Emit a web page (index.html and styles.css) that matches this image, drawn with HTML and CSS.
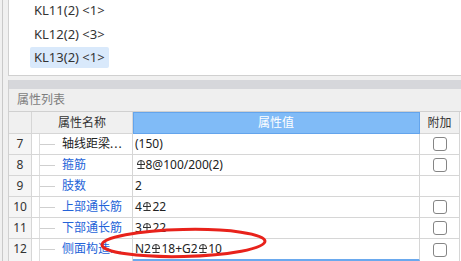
FILE: index.html
```html
<!DOCTYPE html>
<html lang="zh-CN">
<head>
<meta charset="utf-8">
<title>属性列表</title>
<link rel="stylesheet" href="styles.css">
</head>
<body>
<div class="frame">
  <div class="list-panel">
    <div class="item">KL11(2) &lt;1&gt;</div>
    <div class="item">KL12(2) &lt;3&gt;</div>
    <div class="item sel">KL13(2) &lt;1&gt;</div>
  </div>
  <div class="splitter"></div>
  <div class="props">
    <div class="band"></div>
    <div class="title">属性列表</div>
    <div class="grid">
      <div class="cell head"></div>
      <div class="cell head">属性名称</div>
      <div class="cell head value-head">属性值</div>
      <div class="cell head">附加</div>

      <div class="cell num">7</div>
      <div class="cell name"><span class="tree"></span><span class="label">轴线距梁<span class="dots">...</span></span></div>
      <div class="cell val">(150)</div>
      <div class="cell add"><span class="check"></span></div>

      <div class="cell num">8</div>
      <div class="cell name"><span class="tree"></span><span class="label blue">箍筋</span></div>
      <div class="cell val"><svg class="hrb" viewBox="0 0 8 9"><path d="M0.5 4.5V4A3.5 3.5 0 0 1 7.5 4V4.5M0 4.5H8M4 0.5V8.5M0.5 8.5H7.5"/></svg>8@100/200(2)</div>
      <div class="cell add"><span class="check"></span></div>

      <div class="cell num">9</div>
      <div class="cell name"><span class="tree"></span><span class="label blue">肢数</span></div>
      <div class="cell val">2</div>
      <div class="cell add"></div>

      <div class="cell num">10</div>
      <div class="cell name"><span class="tree"></span><span class="label blue">上部通长筋</span></div>
      <div class="cell val">4<svg class="hrb" viewBox="0 0 8 9"><path d="M0.5 4.5V4A3.5 3.5 0 0 1 7.5 4V4.5M0 4.5H8M4 0.5V8.5M0.5 8.5H7.5"/></svg>22</div>
      <div class="cell add"><span class="check"></span></div>

      <div class="cell num">11</div>
      <div class="cell name"><span class="tree"></span><span class="label blue">下部通长筋</span></div>
      <div class="cell val">3<svg class="hrb" viewBox="0 0 8 9"><path d="M0.5 4.5V4A3.5 3.5 0 0 1 7.5 4V4.5M0 4.5H8M4 0.5V8.5M0.5 8.5H7.5"/></svg>22</div>
      <div class="cell add"><span class="check"></span></div>

      <div class="cell num last">12</div>
      <div class="cell name last"><span class="tree"></span><span class="label blue">侧面构造<span class="dots">...</span></span></div>
      <div class="cell val last cur">N2<svg class="hrb" viewBox="0 0 8 9"><path d="M0.5 4.5V4A3.5 3.5 0 0 1 7.5 4V4.5M0 4.5H8M4 0.5V8.5M0.5 8.5H7.5"/></svg>18+G2<svg class="hrb" viewBox="0 0 8 9"><path d="M0.5 4.5V4A3.5 3.5 0 0 1 7.5 4V4.5M0 4.5H8M4 0.5V8.5M0.5 8.5H7.5"/></svg>10</div>
      <div class="cell add last"><span class="check"></span></div>
    </div>
  </div>
</div>
<svg class="mark" viewBox="0 0 461 261" width="461" height="261">
  <ellipse cx="183.5" cy="243" rx="81.5" ry="13.5" transform="rotate(-1.3 183.5 243)"/>
</svg>
</body>
</html>
```
FILE: styles.css
```css
html, body {
  margin: 0;
  padding: 0;
  width: 461px;
  height: 261px;
  overflow: hidden;
  background: #f0f0f0;
  font-family: "Noto Sans", "Noto Sans CJK SC", sans-serif;
  color: #333;
}

.frame {
  margin-left: 2px;
  border-left: 1px solid #c9c9c9;
  padding-left: 5px;
  height: 261px;
  box-sizing: border-box;
}

.list-panel {
  height: 75px;
  background: #fff;
  border-left: 1px solid #d0d0d0;
  border-bottom: 1px solid #d0d0d0;
  padding-left: 21px;
  display: flex;
  flex-direction: column;
  align-items: flex-start;
  gap: 2.5px;
}

.item {
  height: 21px;
  line-height: 21px;
  padding: 0 4px;
  font-size: 13px;
  color: #333;
  border-radius: 2px;
}

.item.sel {
  background: #d9e9fb;
}

.splitter {
  height: 4px;
}

.props {
  border-left: 1px solid #d0d0d0;
}

.band {
  height: 9px;
  background: #d6d7db;
}

.title {
  height: 22px;
  line-height: 22px;
  background: #efefef;
  border-bottom: 1px solid #d0d0d0;
  padding-left: 8px;
  font-size: 12px;
  color: #7d7d7d;
}

.grid {
  display: grid;
  grid-template-columns: 23px 101px 287px 40px;
  grid-template-rows: 22px repeat(5, 21px) 22px;
  background: #fff;
}

.cell {
  box-sizing: border-box;
  border-right: 1px solid #d6d6d6;
  border-bottom: 1px solid #d6d6d6;
  font-size: 12px;
  line-height: 20px;
  white-space: nowrap;
  overflow: hidden;
  color: #222;
}

.cell.last {
  border-bottom: none;
}

.head {
  background: #f0f0f0;
  text-align: center;
  line-height: 21px;
  color: #333;
}

.value-head {
  background: #80bbf7;
  color: #fff;
  border-color: #63a4ec;
  box-shadow: inset 0 1px 0 #63a4ec, inset 1px 0 0 #63a4ec;
}

.num {
  background: #f5f5f5;
  text-align: center;
  color: #333;
}

.name {
  display: flex;
  align-items: stretch;
}

.tree {
  margin-left: 7px;
  width: 23px;
  flex: none;
  box-sizing: border-box;
  border-left: 1px solid #dedede;
  background: linear-gradient(#cfcfcf, #cfcfcf) no-repeat 0 10px / 15px 1px;
}

.label {
  color: #222;
}

.label.blue {
  color: #2463d8;
}

.dots {
  letter-spacing: 1px;
}

.val {
  padding-left: 2px;
}

.val.cur {
  border-bottom: 2px solid #6aa9ee;
  line-height: 19px;
}

.hrb {
  width: 8px;
  height: 9px;
  margin: 0 1px 0 1.5px;
  vertical-align: baseline;
  fill: none;
  stroke: #333;
  stroke-width: 1;
}

.add {
  display: flex;
  align-items: center;
  justify-content: center;
}

.add.last {
  padding-bottom: 1px;
}

.check {
  width: 14px;
  height: 14px;
  box-sizing: border-box;
  border: 1px solid #858585;
  border-radius: 3px;
  background: #fff;
  margin-left: 1px;
}

.mark {
  position: absolute;
  left: 0;
  top: 0;
  pointer-events: none;
  fill: none;
  stroke: #e8221b;
  stroke-width: 3;
}
```
